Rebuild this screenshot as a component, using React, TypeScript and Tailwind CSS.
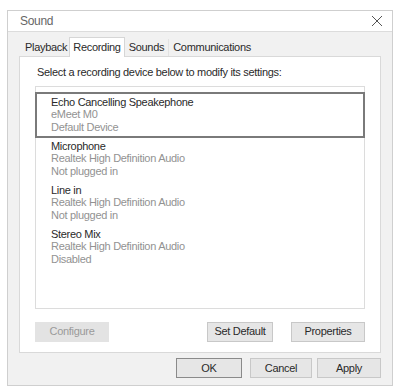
const font = { fontFamily: '"Liberation Sans", Arial, sans-serif' };

type Device = { name: string; sub: string; status: string; selected?: boolean };

const devices: Device[] = [
  { name: "Echo Cancelling Speakephone", sub: "eMeet M0", status: "Default Device", selected: true },
  { name: "Microphone", sub: "Realtek High Definition Audio", status: "Not plugged in" },
  { name: "Line in", sub: "Realtek High Definition Audio", status: "Not plugged in" },
  { name: "Stereo Mix", sub: "Realtek High Definition Audio", status: "Disabled" },
];

function Btn({ label, primary, disabled, w }: { label: string; primary?: boolean; disabled?: boolean; w: string }) {
  return (
    <div
      className={`flex h-[20px] items-center justify-center text-[11px] tracking-[-0.3px] ${w} ${
        disabled
          ? "bg-[#e3e3e3] text-[#9a9a9a] border border-[#e3e3e3]"
          : primary
            ? "border border-[#8a8a8a] bg-[#e6e6e6] text-[#2a2a2a]"
            : "border border-[#c8c8c8] bg-[#e6e6e6] text-[#2a2a2a]"
      }`}
    >
      {label}
    </div>
  );
}

export default function App() {
  return (
    <div className="h-[388px] w-[397px] bg-white pl-[7px] pt-[10px] tracking-[-0.3px]" style={font}>
      <div className="flex h-[376px] w-[386px] flex-col border border-[#cfcfcf] bg-[#f1f1f1]">
        <div className="flex h-[21px] items-center justify-between border-b border-[#dcdcdc] bg-white pl-[12px] pr-[8px]">
          <span className="text-[12px] text-[#666]">Sound</span>
          <svg width="12" height="12" viewBox="0 0 12 12" className="mr-[1px]">
            <path d="M1 1 L11 11 M11 1 L1 11" stroke="#555" strokeWidth="1" />
          </svg>
        </div>

        <div className="flex h-[24px] items-end pl-[13px] pt-[5px] text-[11px] text-[#2a2a2a]">
          <div className="flex h-[17px] items-center pl-[4px] pr-[2px]">Playback</div>
          <div className="relative z-10 -mb-px flex h-[20px] items-center border border-b-0 border-[#d6d6d6] bg-white px-[3px]">
            Recording
          </div>
          <div className="flex h-[17px] items-center border-r border-[#e2e2e2] px-[4px]">Sounds</div>
          <div className="flex h-[17px] items-center px-[4px]">Communications</div>
        </div>

        <div className="mx-[11px] flex h-[297px] flex-col border border-[#d9d9d9] bg-white px-[15px]">
          <div className="mt-[7px] pl-[2px] text-[11px] text-[#2a2a2a]">
            Select a recording device below to modify its settings:
          </div>
          <div className="mt-[5px] h-[223px] border border-[#dcdcdc] pt-[5px]">
            {devices.map((d) => (
              <div
                key={d.name}
                className={`flex flex-col pl-[14px] text-[11px] leading-[12.5px] ${
                  d.selected ? "-mx-px h-[46px] border-2 border-[#7a7a7a] pt-[2px]" : "h-[44px] pt-[2px] pl-[15px]"
                }`}
              >
                <span className="text-[#2a2a2a]">{d.name}</span>
                <span className="text-[#929292]">{d.sub}</span>
                <span className="text-[#929292]">{d.status}</span>
              </div>
            ))}
          </div>
          <div className="mt-[13px] flex items-center">
            <Btn label="Configure" disabled w="w-[74px]" />
            <div className="flex-1" />
            <Btn label="Set Default" w="w-[66px]" />
            <div className="w-[18px]" />
            <Btn label="Properties" w="w-[74px]" />
          </div>
        </div>

        <div className="mt-[5px] flex justify-end pr-[11px]">
          <Btn label="OK" primary w="w-[66px]" />
          <div className="w-[8px]" />
          <Btn label="Cancel" w="w-[62px]" />
          <div className="w-[5px]" />
          <Btn label="Apply" w="w-[64px]" />
        </div>
      </div>
    </div>
  );
}
